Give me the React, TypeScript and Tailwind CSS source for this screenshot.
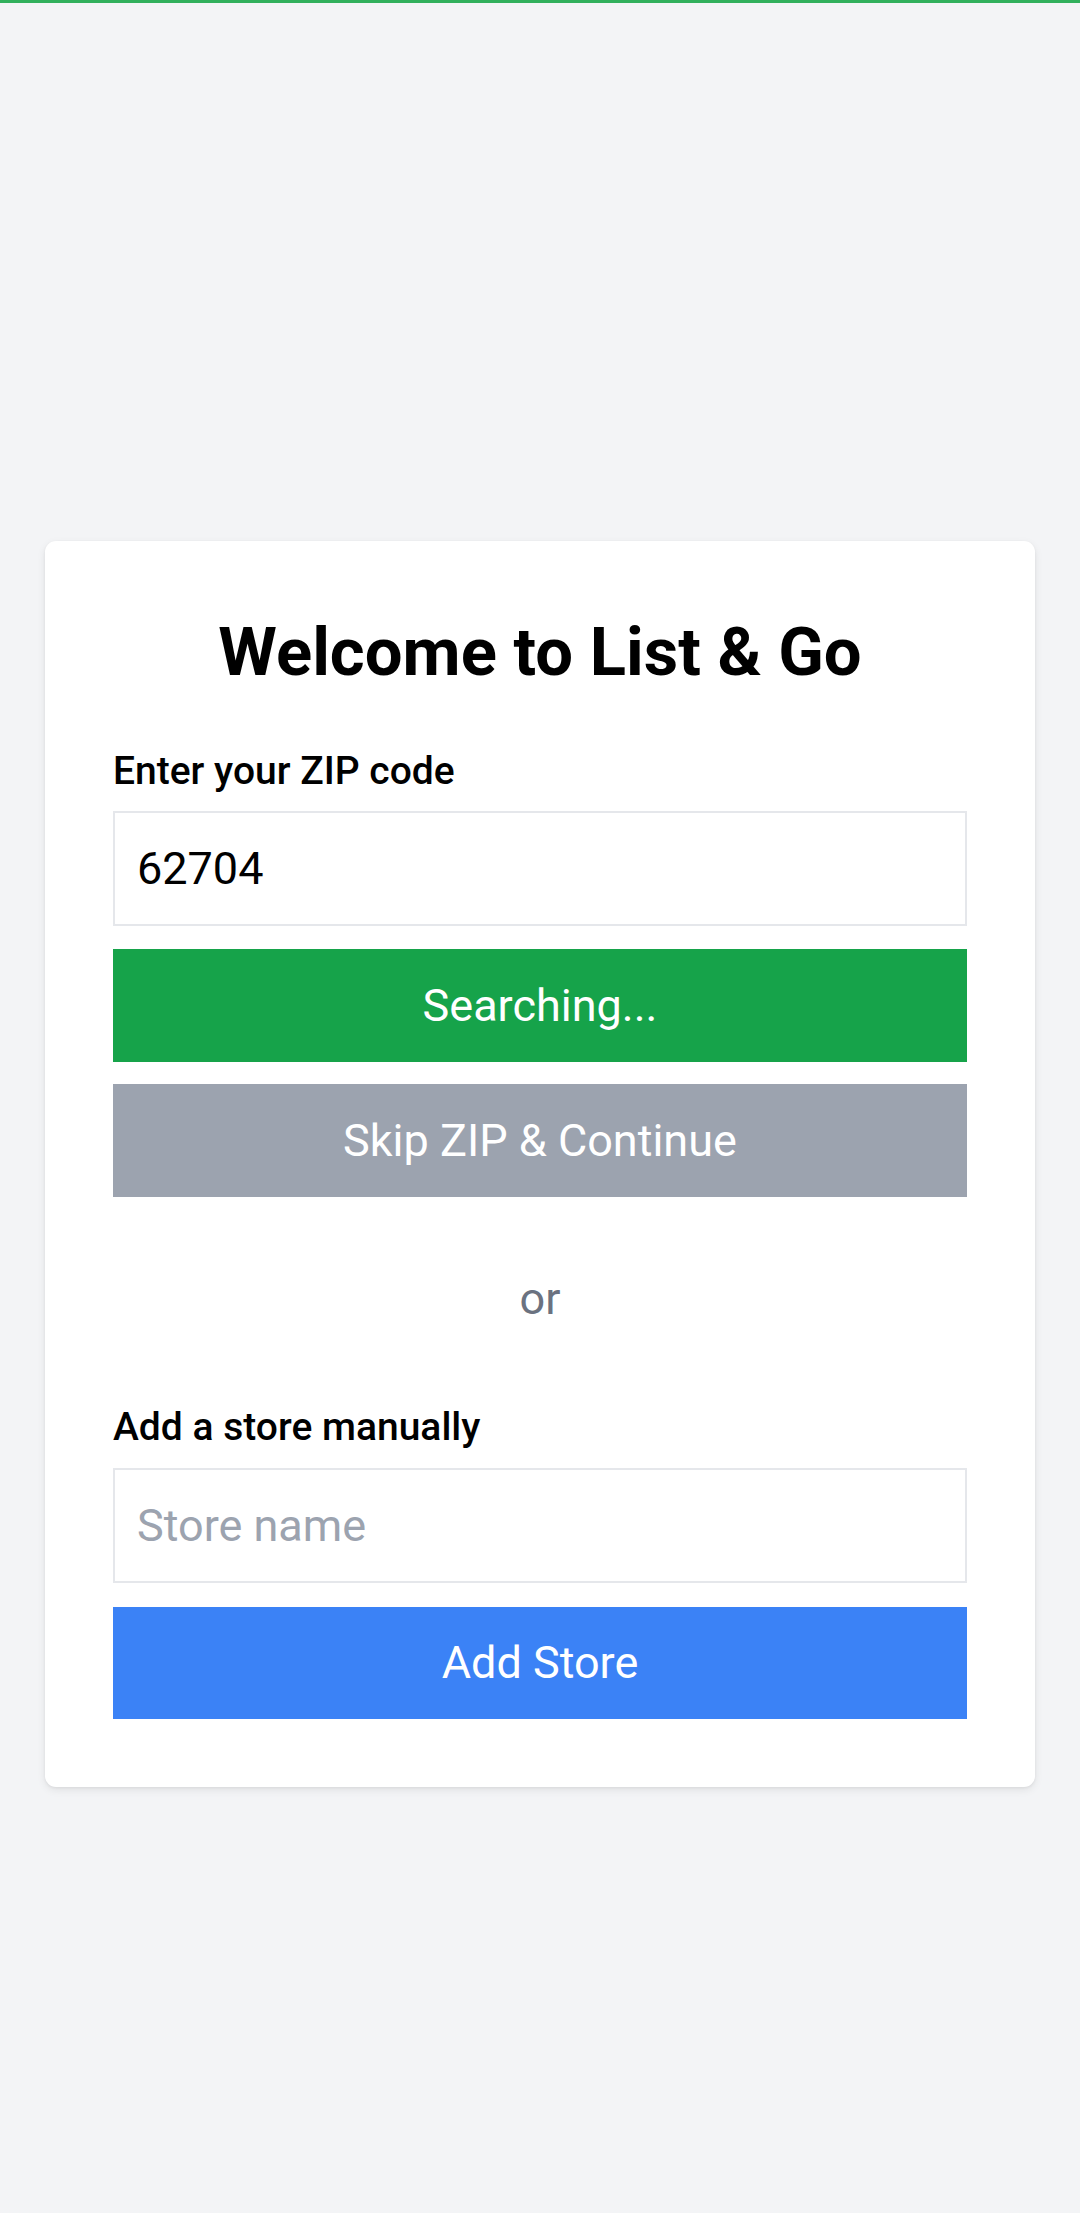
import { useState } from "react";

const FONT = { fontFamily: "Roboto, 'Noto Sans', Arial, sans-serif" };

export default function App() {
  const [zip, setZip] = useState("62704");
  const [storeName, setStoreName] = useState("");

  return (
    <div className="min-h-screen bg-[#f3f4f6]" style={FONT}>
      {/* loading bar */}
      <div className="h-[3px] w-full bg-[#31b05c]" />

      <div className="px-[45px] pt-[538px] pb-[120px]">
        <div className="rounded-[11px] bg-white px-[68px] pt-[66px] pb-[68px] shadow-[0_3px_8px_rgba(0,0,0,0.08),0_1px_3px_rgba(0,0,0,0.06)]">
          <h1 className="mb-[46px] text-center text-[67px] leading-[90px] font-bold text-black">
            Welcome to List &amp; Go
          </h1>

          {/* ZIP lookup */}
          <label className="mb-[12px] block text-[39px] leading-[56px] font-medium text-black">
            Enter your ZIP code
          </label>
          <input
            value={zip}
            onChange={(e) => setZip(e.target.value)}
            className="block h-[115px] w-full border-2 border-[#e5e7eb] px-[22px] text-[45px] text-black outline-none"
          />
          <button className="mt-[23px] flex h-[113px] w-full items-center justify-center bg-[#16a34a] text-[45px] text-white">
            Searching...
          </button>
          <button className="mt-[22px] flex h-[113px] w-full items-center justify-center bg-[#9ca3af] text-[45px] text-white">
            Skip ZIP &amp; Continue
          </button>

          <p className="mt-[68px] text-center text-[45px] leading-[68px] text-[#6b7280]">or</p>

          {/* Manual store */}
          <label className="mt-[66px] mb-[13px] block text-[39px] leading-[56px] font-medium text-black">
            Add a store manually
          </label>
          <input
            value={storeName}
            onChange={(e) => setStoreName(e.target.value)}
            placeholder="Store name"
            className="block h-[115px] w-full border-2 border-[#e5e7eb] px-[22px] text-[45px] text-black outline-none placeholder:text-[#9ca3af]"
          />
          <button className="mt-[24px] flex h-[112px] w-full items-center justify-center bg-[#3b82f6] text-[45px] text-white">
            Add Store
          </button>
        </div>
      </div>
    </div>
  );
}
